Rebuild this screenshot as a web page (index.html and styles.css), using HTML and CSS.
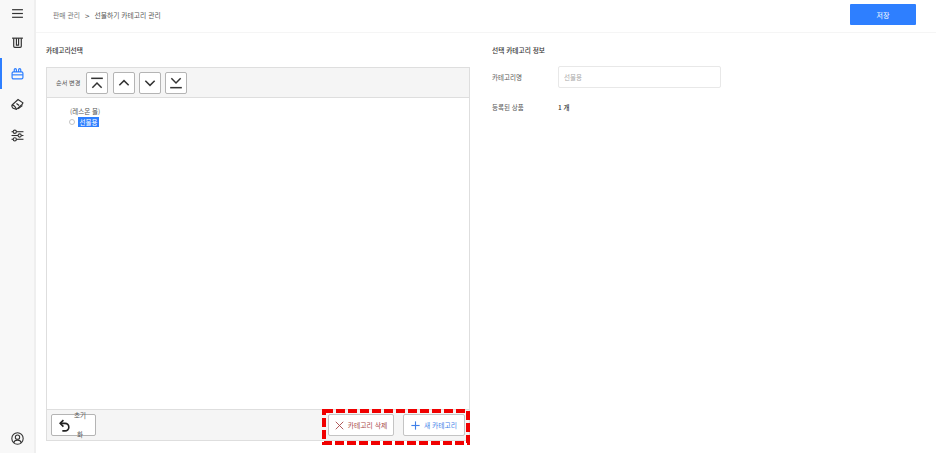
FILE: index.html
```html
<!DOCTYPE html>
<html lang="ko">
<head>
    <meta charset="UTF-8">
    <meta name="viewport" content="width=device-width, initial-scale=1.0">
    <title>선물하기 카테고리 관리</title>
    <link rel="stylesheet" href="styles.css">
</head>
<body>
    <div class="app">
        <aside class="sidebar">
            <div class="nav-item nav-menu">
                <svg class="nav-icon" viewBox="0 0 24 24" fill="none" stroke="currentColor" stroke-width="2.2">
                    <line x1="2" y1="5" x2="22" y2="5"></line>
                    <line x1="2" y1="12" x2="22" y2="12"></line>
                    <line x1="2" y1="19" x2="22" y2="19"></line>
                </svg>
            </div>
            <div class="nav-item">
                <svg class="nav-icon" viewBox="0 0 24 24" fill="none" stroke="currentColor" stroke-width="2.2">
                    <line x1="2" y1="4" x2="22" y2="4"></line>
                    <path d="M5 4v15a2 2 0 0 0 2 2h10a2 2 0 0 0 2-2V4"></path>
                    <path d="M10 4v13h4V4"></path>
                </svg>
            </div>
            <div class="nav-item nav-active">
                <svg class="nav-icon" viewBox="0 0 24 24" fill="none" stroke="currentColor" stroke-width="2.2">
                    <rect x="2" y="9" width="20" height="13" rx="2.500"></rect>
                    <line x1="2" y1="14.500" x2="22" y2="14.500"></line>
                    <path d="M6 9V5a2 2 0 0 1 4 0v4"></path>
                    <path d="M14 9V5a2 2 0 0 1 4 0v4"></path>
                </svg>
            </div>
            <div class="nav-item">
                <svg class="nav-icon" viewBox="0 0 24 24" fill="none" stroke="currentColor" stroke-width="2.2">
                    <path d="M2 13L13 3l9 6-1.500 3L10 21l-6-2c-2-2-3-4-2-6z"></path>
                    <path d="M2 13c3 0 6 2 8 8"></path>
                    <line x1="10" y1="10" x2="15" y2="14"></line>
                    <line x1="13" y1="20" x2="21" y2="14"></line>
                </svg>
            </div>
            <div class="nav-item">
                <svg class="nav-icon" viewBox="0 0 24 24" fill="none" stroke="currentColor" stroke-width="2">
                    <line x1="10" y1="5" x2="23" y2="5"></line>
                    <line x1="1" y1="5" x2="4" y2="5"></line>
                    <circle cx="7" cy="5" r="3"></circle>
                    <line x1="1" y1="12" x2="13" y2="12"></line>
                    <circle cx="16" cy="12" r="3"></circle>
                    <line x1="19" y1="12" x2="23" y2="12"></line>
                    <line x1="10" y1="19" x2="23" y2="19"></line>
                    <line x1="1" y1="19" x2="4" y2="19"></line>
                    <circle cx="7" cy="19" r="3"></circle>
                </svg>
            </div>
            <div class="nav-item nav-user">
                <svg class="nav-icon" viewBox="0 0 24 24" fill="none" stroke="currentColor" stroke-width="2">
                    <circle cx="12" cy="12" r="10.500"></circle>
                    <circle cx="12" cy="9.500" r="4"></circle>
                    <path d="M5 20c1-4 4-5 7-5s6 1 7 5"></path>
                </svg>
            </div>
        </aside>

        <div class="main">
            <header class="topbar">
                <div class="breadcrumb">
                    <span>판매 관리</span>
                    <span class="crumb-sep">&gt;</span>
                    <span class="crumb-current">선물하기 카테고리 관리</span>
                </div>
                <button class="save-btn">저장</button>
            </header>

            <div class="content">
                <section class="tree-section">
                    <h2 class="section-title">카테고리선택</h2>
                    <div class="tree-panel">
                        <div class="tree-toolbar">
                            <span class="toolbar-label">순서 변경</span>
                            <button class="order-btn">
                                <svg class="order-icon" viewBox="0 0 24 24" fill="none" stroke="currentColor" stroke-width="2.6">
                                    <line x1="2" y1="4" x2="22" y2="4"></line>
                                    <polyline points="4 20 12 12 20 20"></polyline>
                                </svg>
                            </button>
                            <button class="order-btn">
                                <svg class="order-icon" viewBox="0 0 24 24" fill="none" stroke="currentColor" stroke-width="2.6">
                                    <polyline points="4 16 12 8 20 16"></polyline>
                                </svg>
                            </button>
                            <button class="order-btn">
                                <svg class="order-icon" viewBox="0 0 24 24" fill="none" stroke="currentColor" stroke-width="2.6">
                                    <polyline points="4 8 12 16 20 8"></polyline>
                                </svg>
                            </button>
                            <button class="order-btn">
                                <svg class="order-icon" viewBox="0 0 24 24" fill="none" stroke="currentColor" stroke-width="2.6">
                                    <polyline points="4 4 12 12 20 4"></polyline>
                                    <line x1="2" y1="20" x2="22" y2="20"></line>
                                </svg>
                            </button>
                        </div>

                        <div class="tree-body">
                            <div class="tree-root">(레스온 몰)</div>
                            <div class="tree-node">
                                <span class="tree-radio"></span>
                                <span class="tree-label">선물용</span>
                            </div>
                        </div>

                        <div class="tree-footer">
                            <button class="reset-btn">
                                <svg class="reset-icon" viewBox="0 0 24 24" fill="none" stroke="currentColor" stroke-width="3">
                                    <polyline points="10 2 4 8 10 14"></polyline>
                                    <path d="M4 8h9a6.500 6.500 0 0 1 0 14H8"></path>
                                </svg>
                                <span class="reset-text">초기화</span>
                            </button>
                            <div class="footer-actions">
                                <button class="action-btn action-delete">
                                    <svg class="action-icon" viewBox="0 0 24 24" fill="none" stroke="currentColor" stroke-width="2.4">
                                        <line x1="2" y1="2" x2="22" y2="22"></line>
                                        <line x1="22" y1="2" x2="2" y2="22"></line>
                                    </svg>
                                    카테고리 삭제
                                </button>
                                <button class="action-btn action-add">
                                    <svg class="action-icon" viewBox="0 0 24 24" fill="none" stroke="currentColor" stroke-width="3">
                                        <line x1="12" y1="1" x2="12" y2="23"></line>
                                        <line x1="1" y1="12" x2="23" y2="12"></line>
                                    </svg>
                                    새 카테고리
                                </button>
                            </div>
                            <svg class="highlight-box" viewBox="0 0 148 36" fill="none">
                                <rect x="2" y="2" width="144" height="32" stroke="#f00000" stroke-width="4" stroke-dasharray="9 3"></rect>
                            </svg>
                        </div>
                    </div>
                </section>

                <section class="info-section">
                    <h2 class="section-title">선택 카테고리 정보</h2>
                    <div class="info-row info-row-input">
                        <span class="info-label">카테고리명</span>
                        <input class="info-input" type="text" placeholder="선물용">
                    </div>
                    <div class="info-row">
                        <span class="info-label">등록된 상품</span>
                        <span class="info-value">1 개</span>
                    </div>
                </section>
            </div>
        </div>
    </div>
</body>
</html>
```

FILE: styles.css
```css
:root {
    --blue: #2e7fff;
    --border: #dedede;
    --text: #333333;
    --text-mid: #555555;
}

* {
    margin: 0;
    padding: 0;
    box-sizing: border-box;
}

body {
    font-family: "Noto Sans CJK KR", "Noto Sans", sans-serif;
    background-color: #ffffff;
    color: var(--text);
    height: 453px;
    overflow: hidden;
}

.app {
    display: flex;
    height: 453px;
}

.sidebar {
    width: 36px;
    flex-shrink: 0;
    display: flex;
    flex-direction: column;
    background-color: #f8f8f8;
    border-right: 2px solid #efefef;
    color: #333333;
}

.nav-item {
    height: 31px;
    display: flex;
    align-items: center;
    justify-content: center;
    padding-right: 1px;
    border-left: 2px solid transparent;
}

.nav-menu {
    height: 27px;
}

.nav-active {
    border-left-color: var(--blue);
    color: var(--blue);
}

.nav-user {
    margin-top: auto;
    height: 30px;
}

.nav-icon {
    width: 13px;
    height: 13px;
}

.main {
    flex: 1;
    display: flex;
    flex-direction: column;
}

.topbar {
    height: 33px;
    flex-shrink: 0;
    display: flex;
    justify-content: space-between;
    align-items: flex-start;
    padding: 4px 20px 0 17px;
    border-bottom: 1px solid #f5f5f5;
}

.breadcrumb {
    display: flex;
    align-items: center;
    gap: 5px;
    height: 22px;
    font-size: 6.8px;
    color: #777777;
}

.crumb-current {
    color: var(--text-mid);
}

.crumb-sep {
    color: #444444;
    font-size: 8px;
}

.save-btn {
    width: 66px;
    height: 21px;
    border: none;
    border-radius: 1px;
    background-color: var(--blue);
    color: #ffffff;
    font-family: inherit;
    font-size: 7px;
}

.content {
    flex: 1;
    display: flex;
    padding: 0 0 12px 10px;
}

.tree-section {
    width: 424px;
    display: flex;
    flex-direction: column;
}

.section-title {
    height: 34px;
    display: flex;
    align-items: center;
    font-size: 6.7px;
    font-weight: 500;
    color: var(--text);
}

.tree-panel {
    flex: 1;
    display: flex;
    flex-direction: column;
    border: 1px solid var(--border);
}

.tree-toolbar {
    height: 30px;
    display: flex;
    align-items: center;
    gap: 4.300px;
    padding-left: 9px;
    background-color: #f5f5f5;
    border-bottom: 1px solid var(--border);
}

.toolbar-label {
    font-size: 6.2px;
    color: var(--text-mid);
    margin-right: 1.500px;
}

.order-btn {
    width: 22px;
    height: 22px;
    display: flex;
    align-items: center;
    justify-content: center;
    background-color: #ffffff;
    border: 1px solid #b4b4b4;
    border-radius: 2px;
    color: #333333;
}

.order-icon {
    width: 14px;
    height: 14px;
}

.tree-body {
    flex: 1;
    padding: 9px 0 0 22px;
}

.tree-root {
    font-size: 6.5px;
    line-height: 9px;
    color: var(--text-mid);
    padding-left: 1px;
}

.tree-node {
    display: flex;
    align-items: center;
    gap: 3px;
    height: 10px;
    margin-top: 1px;
}

.tree-radio {
    width: 6px;
    height: 6px;
    border: 1px solid #c4c4c4;
    border-radius: 50%;
}

.tree-label {
    background-color: var(--blue);
    color: #ffffff;
    font-size: 6.5px;
    line-height: 10px;
    padding: 0 1.500px;
}

.tree-footer {
    position: relative;
    height: 31px;
    display: flex;
    justify-content: space-between;
    align-items: center;
    padding: 0 4px;
    background-color: #f5f5f5;
    border-top: 1px solid var(--border);
}

.reset-btn {
    width: 45px;
    height: 22px;
    display: flex;
    align-items: center;
    padding-left: 6px;
    gap: 2px;
    background-color: #ffffff;
    border: 1px solid #b4b4b4;
    border-radius: 2px;
    color: #222222;
    font-family: inherit;
}

.reset-icon {
    width: 13px;
    height: 13px;
    flex-shrink: 0;
}

.reset-text {
    width: 14px;
    font-size: 6.5px;
    line-height: 19px;
    color: var(--text-mid);
    word-break: break-all;
}

.footer-actions {
    display: flex;
    gap: 9px;
}

.action-btn {
    height: 22px;
    display: flex;
    align-items: center;
    justify-content: center;
    gap: 4px;
    background-color: #ffffff;
    border: 1px solid #c4c4c4;
    border-radius: 2px;
    font-family: inherit;
    font-size: 6.8px;
}

.action-delete {
    width: 66px;
    color: #a84848;
}

.action-add {
    width: 62px;
    color: #3f7fe8;
}

.action-icon {
    width: 9px;
    height: 9px;
}

.highlight-box {
    position: absolute;
    right: -1px;
    top: -1px;
    width: 148px;
    height: 36px;
    pointer-events: none;
}

.info-section {
    margin-left: 22px;
    width: 229px;
}

.info-row {
    display: flex;
    align-items: center;
    font-size: 6.5px;
    height: 20px;
    margin-top: 9px;
}

.info-row-input {
    height: 22px;
    margin-top: -1px;
}

.info-label {
    width: 66px;
    color: var(--text-mid);
}

.info-value {
    font-weight: 500;
    color: var(--text);
}

.info-input {
    flex: 1;
    height: 22px;
    padding: 0 5px;
    border: 1px solid #e8e8e8;
    border-radius: 2px;
    font-family: inherit;
    font-size: 6.5px;
}

.info-input::placeholder {
    color: #aaaaaa;
}
```
